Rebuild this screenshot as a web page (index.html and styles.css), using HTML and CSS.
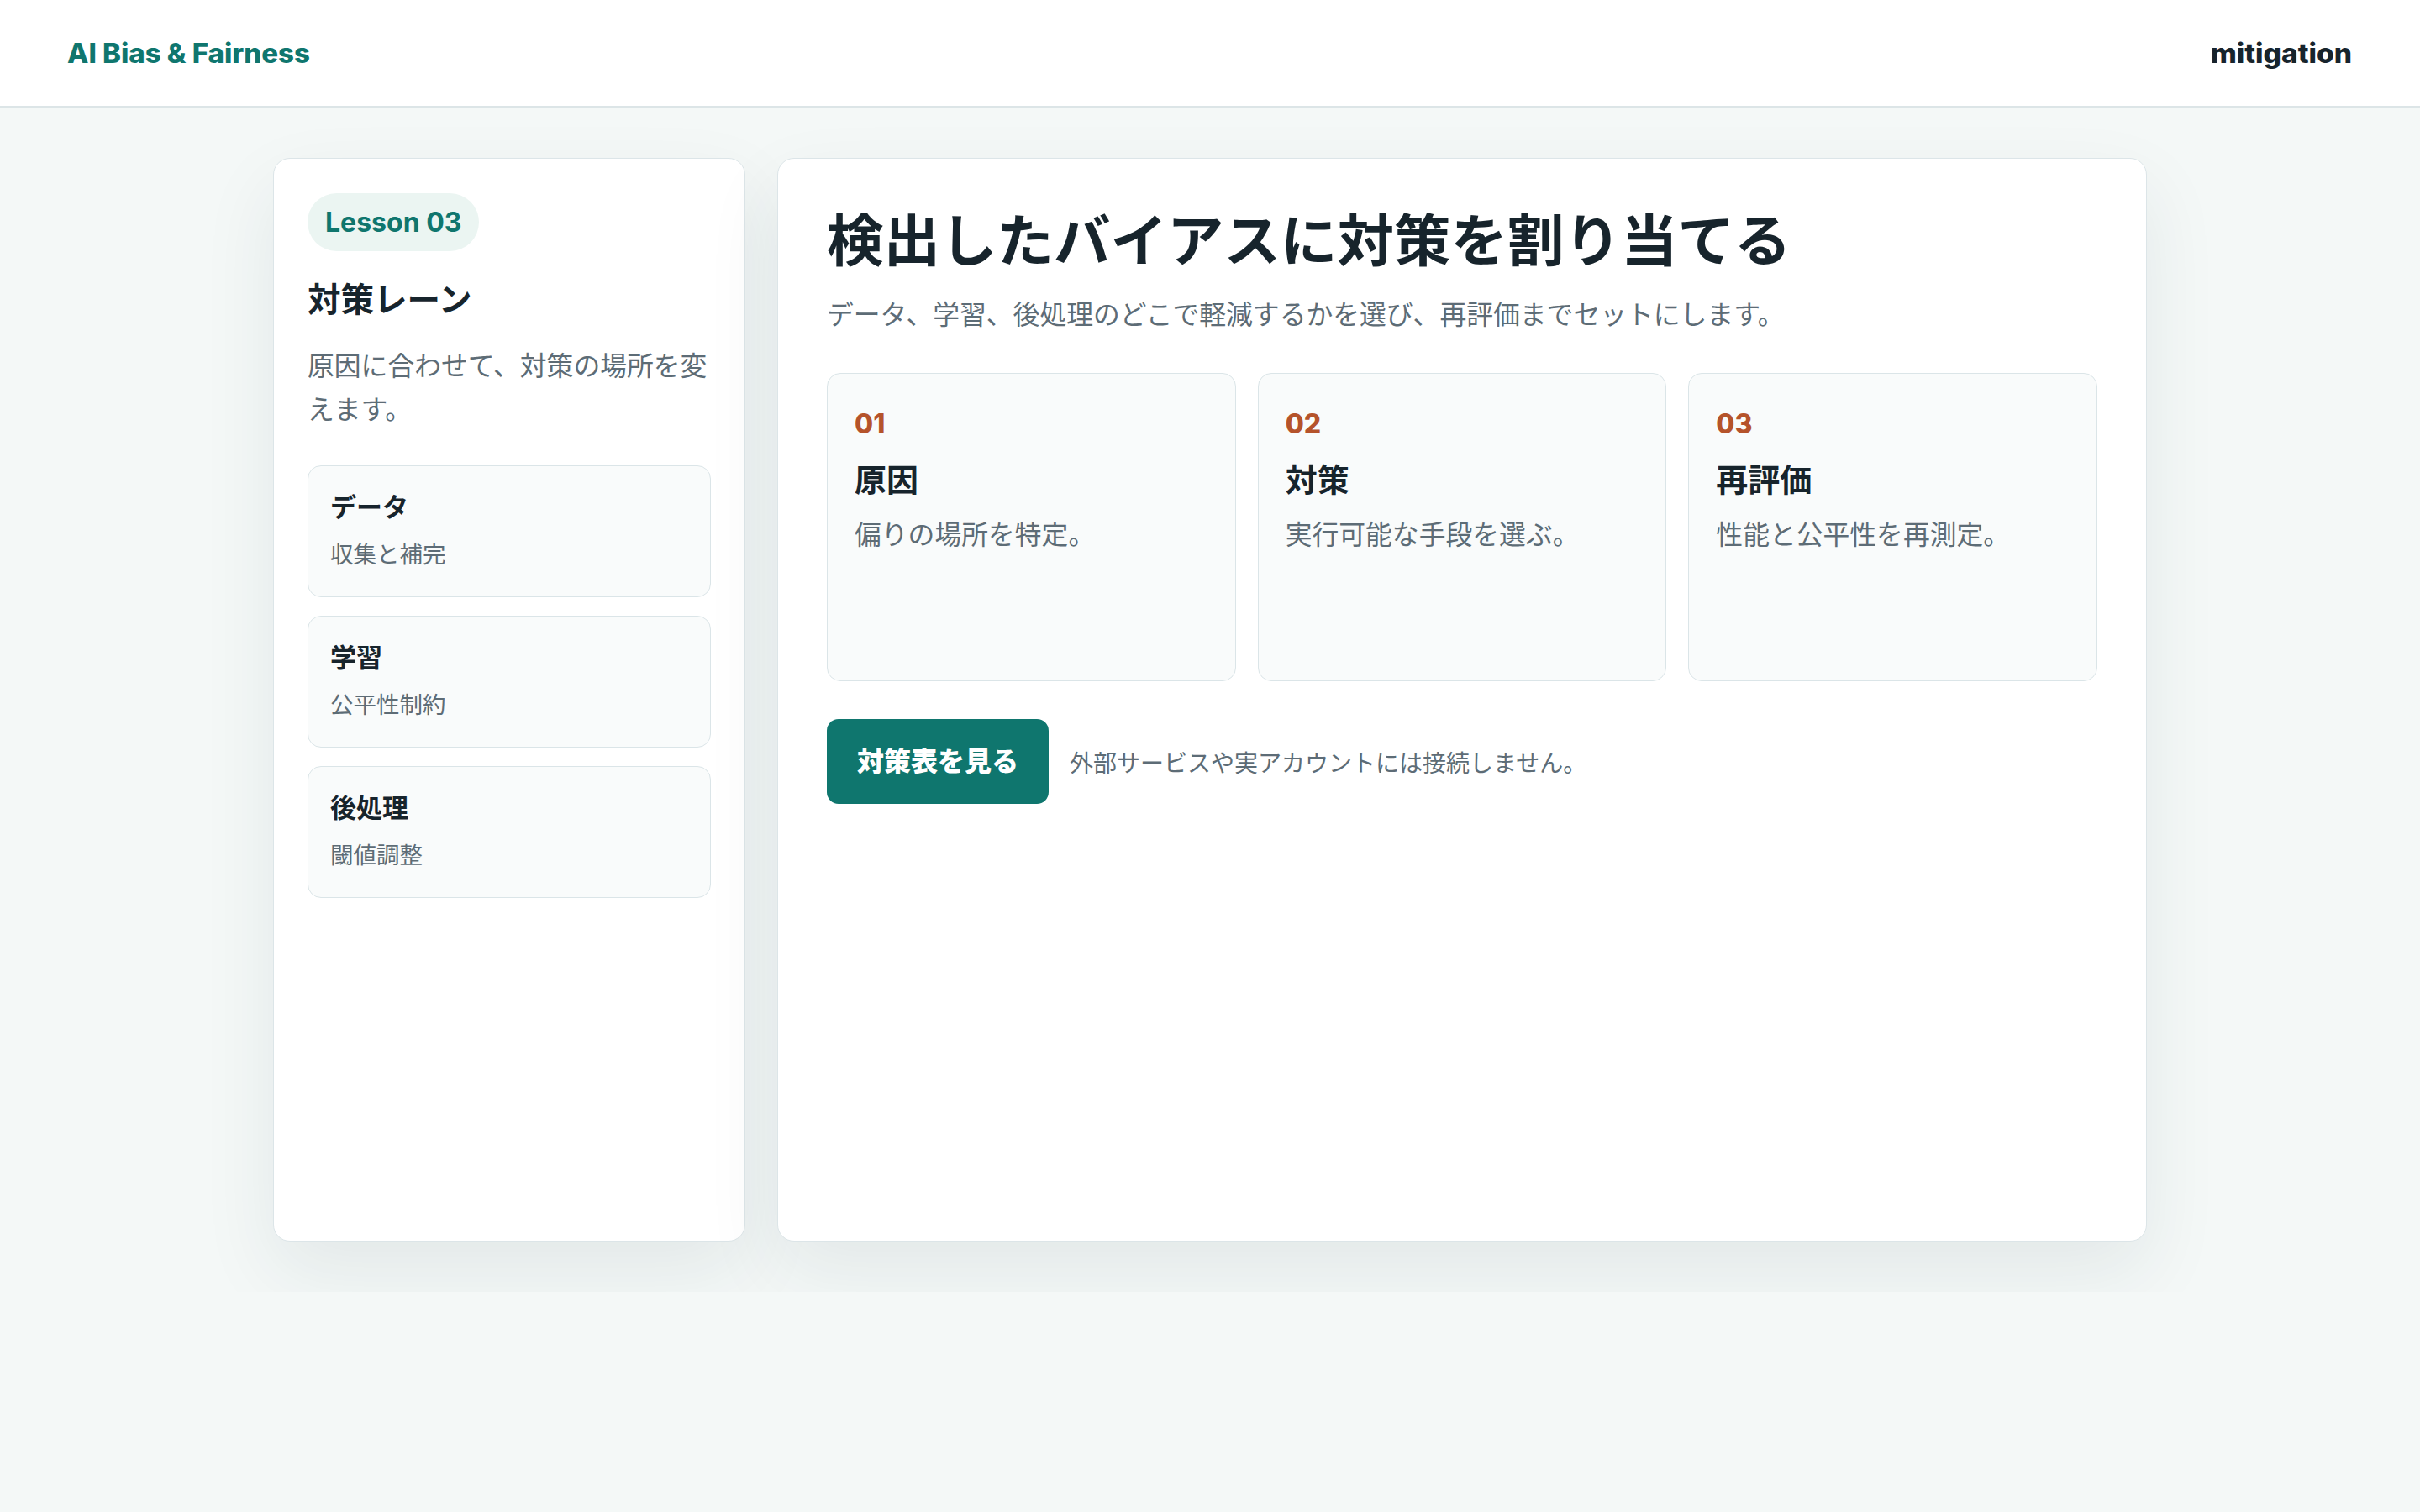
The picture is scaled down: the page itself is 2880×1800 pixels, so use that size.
FILE: index.html
```html
<!DOCTYPE html>
<html lang="ja">
<head>
    <meta charset="UTF-8">
    <meta name="viewport" content="width=device-width, initial-scale=1.0">
    <title>AI Bias &amp; Fairness - mitigation</title>
    <link rel="stylesheet" href="styles.css">
</head>
<body>
    <header class="topbar">
        <div class="brand">AI Bias &amp; Fairness</div>
        <div class="page-tag">mitigation</div>
    </header>
    <main class="layout">
        <aside class="side">
            <span class="badge">Lesson 03</span>
            <h2>対策レーン</h2>
            <p class="side-lead">原因に合わせて、対策の場所を変えます。</p>
            <ul class="lanes">
                <li class="lane">
                    <strong>データ</strong>
                    <span>収集と補完</span>
                </li>
                <li class="lane">
                    <strong>学習</strong>
                    <span>公平性制約</span>
                </li>
                <li class="lane">
                    <strong>後処理</strong>
                    <span>閾値調整</span>
                </li>
            </ul>
        </aside>
        <section class="panel">
            <h1>検出したバイアスに対策を割り当てる</h1>
            <p class="lead">データ、学習、後処理のどこで軽減するかを選び、再評価までセットにします。</p>
            <div class="steps">
                <div class="step">
                    <div class="step-num">01</div>
                    <h3>原因</h3>
                    <p>偏りの場所を特定。</p>
                </div>
                <div class="step">
                    <div class="step-num">02</div>
                    <h3>対策</h3>
                    <p>実行可能な手段を選ぶ。</p>
                </div>
                <div class="step">
                    <div class="step-num">03</div>
                    <h3>再評価</h3>
                    <p>性能と公平性を再測定。</p>
                </div>
            </div>
            <div class="actions">
                <button class="btn">対策表を見る</button>
                <span class="note">外部サービスや実アカウントには接続しません。</span>
            </div>
        </section>
    </main>
</body>
</html>
```

FILE: styles.css
```css
* {
    box-sizing: border-box;
}
body {
    margin: 0;
    background: #f4f8f7;
    color: #17242c;
    font-family: Inter, "Noto Sans CJK JP", sans-serif;
}
.topbar {
    height: 128px;
    background: #fff;
    border-bottom: 2px solid #dce5e7;
    display: flex;
    align-items: center;
    justify-content: space-between;
    padding: 0 81px 0 80px;
}
.brand {
    font-size: 33px;
    font-weight: 800;
    color: #0f766e;
}
.page-tag {
    font-size: 33.5px;
    font-weight: 800;
    color: #17242c;
}
.layout {
    width: 2230px;
    margin: 60px auto;
    display: grid;
    grid-template-columns: 562px 1fr;
    gap: 38px;
    min-height: 1290px;
}
.side,
.panel {
    background: #fff;
    border: 1px solid #dce5e8;
    border-radius: 20px;
    box-shadow: 0 36px 90px rgba(30, 55, 60, 0.08);
}
.side {
    padding: 41px 40px;
}
.badge {
    display: inline-block;
    background: #ebf5f2;
    color: #0f766e;
    font-size: 32px;
    font-weight: 700;
    line-height: 45px;
    padding: 12px 21px;
    border-radius: 40px;
}
.side h2 {
    margin: 32px 0 0;
    font-size: 39.5px;
    line-height: 52px;
    font-weight: 700;
}
.side-lead {
    margin: 27px 0 0;
    font-size: 31.8px;
    line-height: 52px;
    color: #5d6c76;
}
.lanes {
    list-style: none;
    padding: 0;
    margin: 40px 0 0;
    display: flex;
    flex-direction: column;
    gap: 22px;
}
.lane {
    background: #f9fbfb;
    border: 1px solid #dbe5e8;
    border-radius: 16px;
    padding: 27px 26px 28px;
    display: flex;
    flex-direction: column;
    gap: 12px;
}
.lane strong {
    font-size: 31px;
    line-height: 44px;
    font-weight: 700;
}
.lane span {
    font-size: 27.5px;
    line-height: 44px;
    color: #5d6c76;
}
.panel {
    padding: 58px;
}
.panel h1 {
    margin: 0;
    font-size: 67.5px;
    line-height: 80px;
    font-weight: 700;
}
.lead {
    margin: 24px 0 0;
    font-size: 31.8px;
    line-height: 48px;
    color: #5d6c76;
}
.steps {
    margin-top: 45px;
    display: grid;
    grid-template-columns: repeat(3, 1fr);
    gap: 26px;
}
.step {
    background: #f9fbfb;
    border: 1px solid #dbe5e8;
    border-radius: 16px;
    min-height: 367px;
    padding: 35px 32px;
}
.step-num {
    font-size: 32px;
    line-height: 50px;
    font-weight: 800;
    color: #b5532b;
}
.step h3 {
    margin: 16px 0 0;
    font-size: 38px;
    line-height: 50px;
    font-weight: 700;
}
.step p {
    margin: 16px 0 0;
    font-size: 31.8px;
    line-height: 50px;
    color: #5d6c76;
}
.actions {
    margin-top: 45px;
    display: flex;
    align-items: center;
    gap: 25px;
}
.btn {
    background: #0f766e;
    color: #fff;
    border: none;
    border-radius: 14px;
    font-family: inherit;
    font-size: 32px;
    font-weight: 800;
    line-height: 45px;
    padding: 28px 36px;
}
.note {
    font-size: 28px;
    color: #5d6c76;
}
```
